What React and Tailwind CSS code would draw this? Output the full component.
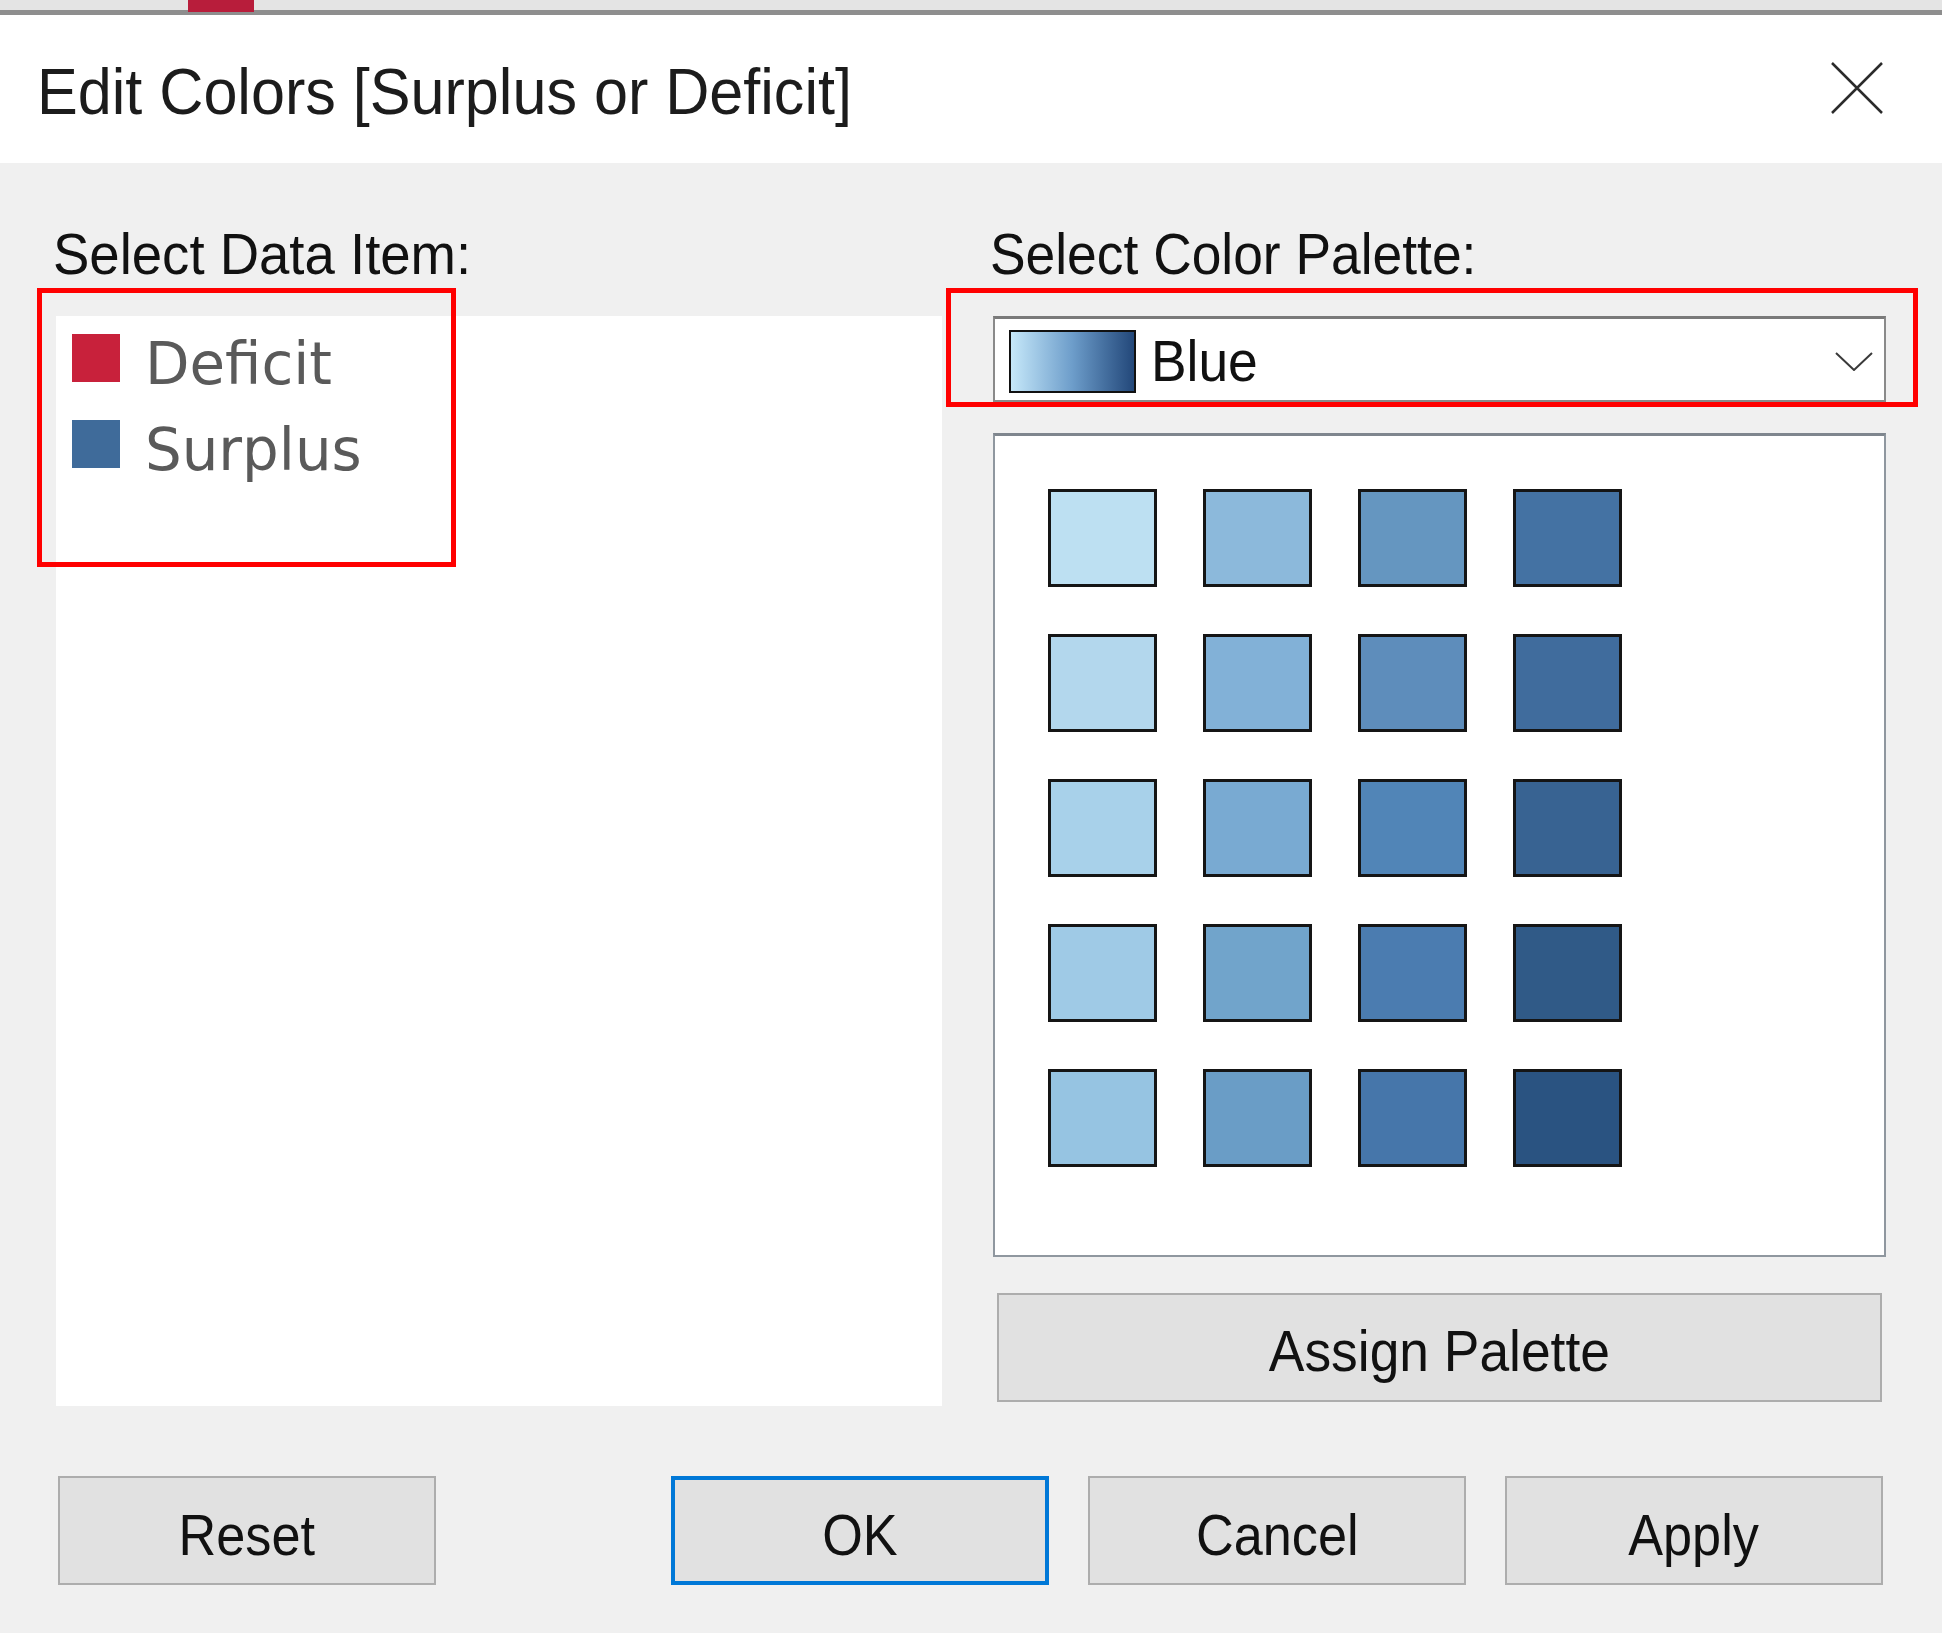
const paleta = [
  ['#bde0f2', '#8cb9db', '#6596c0', '#4472a3'],
  ['#b3d7ed', '#82b1d7', '#5e8dbb', '#406c9d'],
  ['#a8d1ea', '#79aad2', '#5185b7', '#386392'],
  ['#9fcae6', '#71a4cb', '#4b7cb0', '#305a87'],
  ['#96c4e2', '#6a9dc6', '#4676aa', '#2a5381'],
]

const items = [
  { nombre: 'Deficit', color: 'bg-[#c8213b]' },
  { nombre: 'Surplus', color: 'bg-[#3f6b9a]' },
]

function Boton({ texto, activo }) {
  return (
    <button
      className={
        'w-[378px] h-[109px] bg-[#e1e1e1] flex items-center justify-center pt-[8px] ' +
        (activo ? 'border-[4px] border-[#0078d7]' : 'border-2 border-[#adadad]')
      }
    >
      <span className="inline-block text-[58px] leading-none text-[#111] scale-x-[0.9]">{texto}</span>
    </button>
  )
}

export default function App() {
  return (
    <div className="relative w-[1942px] h-[1633px] bg-[#f0f0f0] flex flex-col overflow-hidden font-['Liberation_Sans',Arial,sans-serif]">
      {/* barra superior */}
      <div className="h-[15px] bg-[#e4e4e4] border-b-[5px] border-[#8e8e8e] flex">
        <div className="ml-[188px] w-[66px] h-[12px] bg-[#b81d3b]" />
      </div>

      {/* titulo */}
      <div className="h-[148px] bg-white flex items-start justify-between">
        <div className="pl-[37px] pt-[44px]">
          <span className="inline-block origin-left scale-x-[0.94] text-[65px] leading-none text-[#1c1c1c]">
            Edit Colors [Surplus or Deficit]
          </span>
        </div>
        <svg className="mt-[47px] mr-[59px]" width="52" height="52" viewBox="0 0 52 52" fill="none">
          <path d="M1 1 L51 51 M51 1 L1 51" stroke="#2b2b2b" strokeWidth="2.5" />
        </svg>
      </div>

      {/* cuerpo */}
      <div className="flex-1 px-[56px] pt-[62px]">
        <div className="flex gap-[51px]">
          {/* columna izquierda */}
          <div className="w-[886px] flex flex-col">
            <span className="-ml-[3px] inline-block origin-left scale-x-[0.94] text-[58px] leading-none text-[#111]">
              Select Data Item:
            </span>
            <div className="mt-[33px] h-[1090px] bg-white pl-[16px] pt-[18px] font-['DejaVu_Sans',sans-serif]">
              {items.map(item => (
                <div key={item.nombre} className="h-[86px] flex items-start">
                  <div className={`w-[48px] h-[48px] ${item.color}`} />
                  <span className="ml-[25px] inline-block origin-left scale-x-[0.98] text-[59px] leading-none text-[#5a5a5a]">{item.nombre}</span>
                </div>
              ))}
            </div>
          </div>

          {/* columna derecha */}
          <div className="w-[893px] flex flex-col">
            <span className="-ml-[3px] inline-block origin-left scale-x-[0.92] text-[58px] leading-none text-[#111]">
              Select Color Palette:
            </span>
            <div className="mt-[33px] h-[86px] bg-white border-2 border-[#8a8a8a] border-t-[3px] border-t-[#7a7a7a] flex items-start pl-[14px] pt-[11px]">
              <div className="w-[127px] h-[63px] border-2 border-[#111] bg-linear-to-r from-[#c6e8f9] via-[#6d9dca] to-[#23487a]" />
              <span className="ml-[15px] mt-[2px] inline-block origin-left scale-x-[0.92] text-[58px] leading-none text-[#111]">
                Blue
              </span>
              <svg className="ml-auto mt-[22px] mr-[11px]" width="38" height="19" viewBox="0 0 38 19" fill="none">
                <path d="M1 1 L19 18 L37 1" stroke="#3a3a3a" strokeWidth="2" />
              </svg>
            </div>
            <div className="mt-[31px] h-[824px] bg-white border-2 border-[#8f979f] border-t-[3px] border-t-[#7f868e] p-[53px]">
              <div className="grid grid-cols-[repeat(4,109px)] gap-x-[46px] gap-y-[47px]">
                {paleta.flat().map((c, i) => (
                  <div key={i} className="h-[98px] border-[3px] border-[#151515]" style={{ backgroundColor: c }} />
                ))}
              </div>
            </div>
            <button className="mt-[36px] mx-[4px] h-[109px] bg-[#e1e1e1] border-2 border-[#adadad] flex items-center justify-center pt-[7px]">
              <span className="inline-block text-[58px] leading-none text-[#111] scale-x-[0.92]">Assign Palette</span>
            </button>
          </div>
        </div>

        {/* botones */}
        <div className="mt-[70px] flex pl-[2px] pr-[3px]">
          <Boton texto="Reset" />
          <div className="ml-auto flex gap-[39px]">
            <Boton texto="OK" activo />
            <Boton texto="Cancel" />
            <Boton texto="Apply" />
          </div>
        </div>
      </div>

      {/* marcas rojas */}
      <div className="absolute left-[37px] top-[288px] w-[419px] h-[279px] border-[5px] border-[#ff0000]" />
      <div className="absolute left-[946px] top-[288px] w-[972px] h-[119px] border-[5px] border-[#ff0000]" />
    </div>
  )
}
